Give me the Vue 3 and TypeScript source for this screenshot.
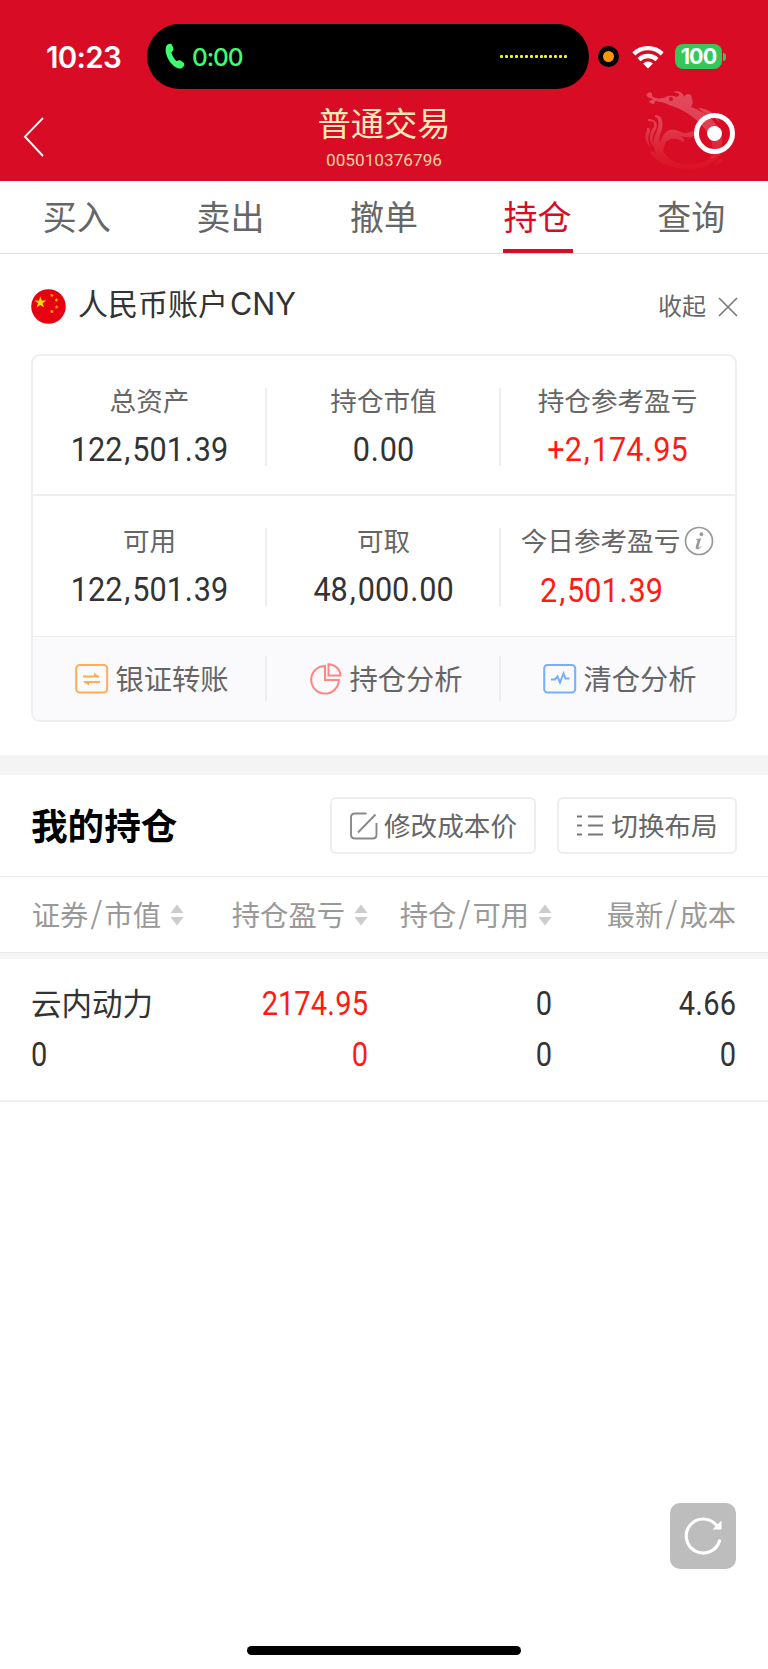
<script setup lang="ts">
interface Metric {
  label: string
  value: string
  red?: boolean
  info?: boolean
}

interface Column {
  title: string[]
  sortable: boolean
  top: string
  bottom: string
  red?: boolean
}

const tabs: string[] = ['买入', '卖出', '撤单', '持仓', '查询']
const activeTab = '持仓'

const metricRows: Metric[][] = [
  [
    { label: '总资产', value: '122,501.39' },
    { label: '持仓市值', value: '0.00' },
    { label: '持仓参考盈亏', value: '+2,174.95', red: true },
  ],
  [
    { label: '可用', value: '122,501.39' },
    { label: '可取', value: '48,000.00' },
    { label: '今日参考盈亏', value: '2,501.39', red: true, info: true },
  ],
]

const actions: { icon: string; label: string }[] = [
  { icon: 'transfer', label: '银证转账' },
  { icon: 'pie', label: '持仓分析' },
  { icon: 'pulse', label: '清仓分析' },
]

const columns: Column[] = [
  { title: ['证券', '市值'], sortable: true, top: '云内动力', bottom: '0' },
  { title: ['持仓盈亏'], sortable: true, top: '2174.95', bottom: '0', red: true },
  { title: ['持仓', '可用'], sortable: true, top: '0', bottom: '0' },
  { title: ['最新', '成本'], sortable: false, top: '4.66', bottom: '0' },
]

const isPunct = (ch: string): boolean => ch === ',' || ch === '.'
</script>

<template>
  <div class="screen">
    <header class="header">
      <div class="status">
        <span class="time">10:23</span>
        <div class="island">
          <svg class="phone" width="20" height="27" viewBox="0 0 20 27">
            <path d="M1.2 3.2C2.6.7 5.600-.2 7.200 2.200L8.300 5.600C8.700 7.300 7.600 8.200 6.400 9.400C7.200 12.800 9.200 15.800 11.800 18.200C13 17.600 14.300 16.900 15.600 17.600L18.600 19.700C20.200 21.200 18.900 23.700 16.900 25C14.200 26.500 10 24.800 6.600 20.800C2.500 16 -.7 8.400 1.200 3.200Z" />
          </svg>
          <span class="call">0:00</span>
          <span class="dots"><i v-for="n in 14" :key="n"></i></span>
        </div>
        <span class="mic"></span>
        <svg class="wifi" width="32" height="24" viewBox="0 0 32 24">
          <g fill="none" stroke="#fff" stroke-width="4.300">
            <path d="M1.800 8.900A20.500 20.500 0 0 1 30.200 8.900" />
            <path d="M7 14.600A13 13 0 0 1 25 14.600" />
          </g>
          <path d="M16 23.500L11 18.500A7.200 7.200 0 0 1 21 18.500Z" fill="#fff" />
        </svg>
        <span class="battery">100</span>
        <span class="nub"></span>
      </div>
      <div class="nav">
        <svg class="back" width="22" height="42" viewBox="0 0 22 42">
          <path d="M20 2L2 20.700L20 40" fill="none" stroke="#fff" stroke-width="1.900" />
        </svg>
        <div class="titles">
          <h1>普通交易</h1>
          <p>005010376796</p>
        </div>
        <div class="brand">
          <svg width="94" height="84" viewBox="0 0 94 84">
            <defs>
              <linearGradient id="fade" gradientUnits="userSpaceOnUse" x1="0" y1="0" x2="0" y2="84">
                <stop offset="0" stop-color="#fff" stop-opacity=".27" />
                <stop offset=".45" stop-color="#fff" stop-opacity=".2" />
                <stop offset=".75" stop-color="#fa8" stop-opacity=".12" />
                <stop offset="1" stop-color="#f64" stop-opacity=".03" />
              </linearGradient>
            </defs>
            <path
              fill="url(#fade)"
              fill-rule="evenodd"
              d="M3 3C5 1 8 3 7 6C10 9 16 9 21 7C24 5 28 6 32 7C36 5 35 3 28 2C34 0 38 3 39 7C42 2 47 4 47 9C48 11 48 14 46 17C61 22 72 32 76 44C80 54 75 64 67 69L65 68C70 60 67 47 60 39C50 27 38 19 24 15C19 12 15 12 10 11C10 15 7 15 6 13C3 13 4 10 7 10L8 9C5 8 4 8 3 7C1 6 1 4 3 3ZM24 9A2 2 0 1 0 28 9A2 2 0 1 0 24 9Z"
            />
            <path
              fill="url(#fade)"
              d="M10 25C19 25 19 36 15 45C13 55 18 65 28 71C42 78 62 76 76 58L79 60C66 83 37 84 20 73C8 64 6 53 11 43C14 37 15 28 10 27ZM3 29C11 29 14 34 10 41C7 46 7 52 9 57C3 51 4 43 9 37C10 32 8 31 3 31ZM2 38C5 37 6 41 4 44C2 49 4 55 6 58C0 53-1 45 2 41ZM16 67C14 57 14 49 21 42C27 37 32 41 39 43C44 44 48 39 52 42C48 49 44 48 35 46C40 48 41 51 37 52C34 48 23 47 20 54C18 58 18 63 19 68ZM5 62C9 60 10 64 16 68C23 73 26 76 30 77C22 76 12 72 7 65ZM53 18C64 18 71 25 75 33C70 27 65 24 59 23L65 29C60 24 57 21 53 18ZM74 69C79 67 78 74 72 74L70 76L70 72Z"
            />
          </svg>
          <span class="target"></span>
        </div>
      </div>
    </header>

    <nav class="tabs">
      <span v-for="tab in tabs" :key="tab" class="tab" :class="{ active: tab === activeTab }">
        <b>{{ tab }}</b>
      </span>
    </nav>

    <section class="account">
      <svg class="flag" width="35" height="35" viewBox="0 0 35 35">
        <circle cx="17.500" cy="17.500" r="17.300" fill="#e60012" />
        <g fill="#ffd800">
          <path d="M9.300 7.200L10.700 11.500H15.200L11.600 14.200L13 18.500L9.300 15.900L5.600 18.500L7 14.200L3.400 11.500H7.900Z" />
          <g fill="#ffb400">
            <path d="M20.800 4.500L21.500 5.700L22.800 6.200L21.700 7L21.400 8.400L20.500 7.300L19.100 7.300L19.900 6.200L19.400 4.900L20.600 5.300Z" />
            <path d="M25.500 9L26.100 10.300L27.500 10.800L26.300 11.600L26.200 13L25.100 12.100L23.800 12.400L24.300 11.100L23.700 9.900L25 10Z" />
            <path d="M25.500 16L26 17.300L27.400 17.300L26.400 18.300L26.900 19.700L25.600 18.900L24.400 19.700L24.700 18.300L23.700 17.300L25 17.200Z" />
            <path d="M20.900 20.500L21.500 21.700L22.900 21.800L21.900 22.800L22.200 24.200L20.900 23.500L19.700 24.200L19.900 22.800L18.900 21.800L20.200 21.700Z" />
          </g>
        </g>
      </svg>
      <span class="account-name">人民币账户<em>CNY</em></span>
      <span class="collapse">收起</span>
      <svg class="close" width="20" height="20" viewBox="0 0 20 20">
        <path d="M1 1L19 19M19 1L1 19" stroke="#777" stroke-width="1.600" />
      </svg>
    </section>

    <section class="card">
      <div v-for="(row, r) in metricRows" :key="r" class="metrics">
        <div v-for="m in row" :key="m.label" class="metric" :class="{ wide: m.info }">
          <div class="metric-label">
            <span>{{ m.label }}</span>
            <svg v-if="m.info" class="info" width="30" height="30" viewBox="0 0 30 30">
              <circle cx="15" cy="15" r="13.500" fill="none" stroke="#999" stroke-width="1.700" />
              <circle cx="17.400" cy="8.200" r="1.900" fill="#999" />
              <path d="M12.400 13.100L17 12.300L14.400 21.300Q14.600 22.100 17 19.900L17.400 20.400Q14.800 23.600 12.600 23.200Q11.200 22.700 11.800 20.600L13.700 14.200L12.200 13.800Z" fill="#999" />
            </svg>
          </div>
          <div class="num" :class="{ red: m.red }">
            <span v-for="(ch, i) in m.value" :key="i" :class="{ punct: isPunct(ch) }">{{ ch }}</span>
          </div>
        </div>
      </div>
      <div class="actions">
        <div v-for="a in actions" :key="a.label" class="action">
          <svg v-if="a.icon === 'transfer'" width="34" height="32" viewBox="0 0 34 32" fill="none" stroke="#ffac56" stroke-width="2">
            <rect x="1.200" y="2" width="31" height="27.500" rx="3.500" />
            <path d="M8 13.500H24M9 19H25" />
            <path d="M19 9.800L25 14H19ZM14 22.500L8 18.500H14Z" fill="#ffac56" stroke="none" />
          </svg>
          <svg v-else-if="a.icon === 'pie'" width="34" height="32" viewBox="0 0 34 32" fill="none" stroke="#ff8585" stroke-width="2">
            <path d="M16 3A13.800 13.800 0 1 0 29.800 17H16Z" />
            <path d="M19.500 1.200V12.500H31.500A12 12 0 0 0 19.500 1.200Z" />
          </svg>
          <svg v-else width="34" height="32" viewBox="0 0 34 32" fill="none" stroke="#76aeff" stroke-width="2">
            <rect x="1.200" y="2" width="31" height="27.500" rx="3.500" />
            <path d="M8 16.500H12L14.500 13.500L17 19.500L20.500 10.500L22.500 15.500H26.500" />
          </svg>
          <span>{{ a.label }}</span>
        </div>
      </div>
    </section>

    <div class="gap"></div>

    <section class="holdings-head">
      <h2>我的持仓</h2>
      <button class="btn edit">
        <svg width="30" height="30" viewBox="0 0 30 30" fill="none" stroke="#888" stroke-width="1.900">
          <path d="M17.500 2.500H6Q2 2.500 2 6.500V23.500Q2 27.500 6 27.500H23.500Q27.500 27.500 27.500 23.500V12M9 21.500L26.500 3.500" />
        </svg>
        <span>修改成本价</span>
      </button>
      <button class="btn layout">
        <svg width="28" height="24" viewBox="0 0 28 24" stroke="#777" stroke-width="2">
          <path d="M1 2.500H6M1 11.500H6M1 20.500H6M12 2.500H27M12 11.500H27M12 20.500H27" />
        </svg>
        <span>切换布局</span>
      </button>
    </section>

    <section class="table">
      <div class="thead">
        <div v-for="c in columns" :key="c.title[0]" class="th">
          <span>{{ c.title[0] }}</span>
          <template v-if="c.title.length > 1"><i class="slash">/</i><span>{{ c.title[1] }}</span></template>
          <svg v-if="c.sortable" width="14" height="22" viewBox="0 0 14 22" fill="#ccc">
            <path d="M7 .5L13.500 9H.5ZM7 21.500L13.500 13H.5Z" />
          </svg>
        </div>
      </div>
      <div class="band"></div>
      <div class="trow">
        <div v-for="(c, k) in columns" :key="k" class="td">
          <div v-if="k === 0" class="stock">{{ c.top }}</div>
          <div v-else class="num" :class="{ red: c.red }">
            <span v-for="(ch, i) in c.top" :key="i" :class="{ punct: isPunct(ch) }">{{ ch }}</span>
          </div>
          <div class="num" :class="{ red: c.red }"><span>{{ c.bottom }}</span></div>
        </div>
      </div>
    </section>

    <button class="refresh">
      <svg width="40" height="40" viewBox="0 0 40 40">
        <path d="M36.500 25A17 17 0 1 1 34 10" fill="none" stroke="#fff" stroke-width="3.200" stroke-linecap="round" />
        <path d="M38.500 4.500V13.500H29.500Z" fill="#fff" />
      </svg>
    </button>
    <div class="home"></div>
  </div>
</template>

<style>
body {
  background: #fff;
}
</style>

<style scoped>
* {
  box-sizing: border-box;
}
.screen {
  position: relative;
  width: 768px;
  height: 1669px;
  overflow: hidden;
  background: #fff;
  color: #333;
  font-family: 'Noto Sans CJK SC', sans-serif;
  font-weight: 400;
}
svg {
  display: block;
  flex: none;
}
h1,
h2,
p {
  margin: 0;
}
.header {
  height: 181px;
  background: #d80c24;
}
.status {
  display: flex;
  align-items: center;
  height: 89px;
  padding: 24px 0 0 46px;
  font-family: Inter, sans-serif;
}
.time {
  width: 101px;
  color: #fff;
  font-size: 29.500px;
  font-weight: 600;
  letter-spacing: -0.700px;
  line-height: 36px;
}
.island {
  display: flex;
  align-items: center;
  width: 442px;
  height: 65px;
  padding: 0 22px 0 18px;
  border-radius: 33px;
  background: #000;
}
.phone {
  fill: #3dff70;
}
.call {
  margin-left: 7px;
  color: #3dff70;
  font-size: 24.500px;
  font-weight: 500;
  letter-spacing: -1.100px;
}
.dots {
  display: flex;
  gap: 1.900px;
  margin-left: auto;
}
.dots i {
  width: 3px;
  height: 3px;
  border-radius: 1px;
  background: #f6f60c;
}
.mic {
  width: 21px;
  height: 21px;
  margin-left: 9px;
  border: 5.500px solid #000;
  border-radius: 50%;
  background: #ff9500;
}
.wifi {
  margin-left: 13px;
}
.battery {
  width: 47px;
  height: 25px;
  margin-left: 11px;
  border-radius: 8px;
  background: #34c759;
  color: #fff;
  font-size: 21.500px;
  font-weight: 700;
  letter-spacing: -0.900px;
  line-height: 25px;
  text-align: center;
}
.nub {
  width: 3px;
  height: 8px;
  margin-left: 1px;
  border-radius: 0 4px 4px 0;
  background: #34c759;
}
.nav {
  position: relative;
  display: flex;
  justify-content: center;
  height: 92px;
}
.back {
  position: absolute;
  left: 23px;
  top: 27px;
}
.titles {
  color: #ffe9b8;
  text-align: center;
}
.titles h1 {
  margin-top: 11px;
  font-size: 33.300px;
  font-weight: 400;
  line-height: 44px;
}
.titles p {
  margin-top: 5px;
  font: 400 17.200px/22px Roboto, sans-serif;
  color: #fbd3a6;
}
.brand {
  position: absolute;
  left: 645px;
  top: 1px;
}
.target {
  position: absolute;
  left: 49px;
  top: 23px;
  width: 41px;
  height: 41px;
  border: 5.500px solid #fff;
  border-radius: 50%;
}
.target::after {
  content: '';
  position: absolute;
  left: 7.500px;
  top: 7.500px;
  width: 15px;
  height: 15px;
  border-radius: 50%;
  background: #fff;
}
.tabs {
  display: flex;
  height: 73px;
  border-bottom: 1px solid #ddd;
}
.tab {
  display: flex;
  flex: 1;
  justify-content: center;
  color: #666;
  font-size: 34px;
  line-height: 70px;
}
.tab b {
  width: 70px;
  height: 72px;
  font-weight: 400;
  text-align: center;
}
.tab.active b {
  border-bottom: 4px solid #d80c24;
  color: #d80c24;
}
.account {
  display: flex;
  align-items: center;
  height: 100px;
  padding: 5px 30px 0 31px;
}
.account-name {
  margin: -9px auto 0 12px;
  font-size: 30px;
}
.account-name em {
  margin-left: 2px;
  font-family: Inter, sans-serif;
  font-size: 30.500px;
  font-style: normal;
  font-weight: 400;
}
.collapse {
  color: #666;
  font-size: 24px;
  margin: -4px 12px 0 0;
}
.card {
  margin: 0 31px 0;
  overflow: hidden;
  border: 2px solid #eee;
  border-radius: 9px;
}
.metrics {
  display: flex;
  height: 140px;
  border-bottom: 2px solid #eee;
}
.metrics + .metrics {
  height: 141px;
  border-bottom-width: 1px;
}
.metric {
  position: relative;
  flex: 1;
  padding: 25px 1px 0 0;
}
.metric:not(:last-child)::after,
.action:not(:last-child)::after {
  content: '';
  position: absolute;
  right: 0;
  top: 32px;
  width: 2px;
  height: 78px;
  background: #eee;
}
.metric-label {
  display: flex;
  justify-content: center;
  gap: 4px;
  align-items: center;
  height: 38px;
  color: #666;
  font-size: 26.600px;
  line-height: 38px;
}
.info {
  margin-top: 2px;
}
.num {
  color: #333;
  font-family: Roboto, sans-serif;
  font-size: 34px;
  font-weight: 400;
  line-height: 40px;
  white-space: nowrap;
  text-align: center;
  transform: scaleX(0.9);
}
.num .punct {
  display: inline-block;
  width: 11px;
  text-align: center;
}
.metric .num {
  margin-top: 10px;
}
.num.red {
  color: #ff1a14;
}
.metric.wide .num {
  margin-top: 11px;
  margin-left: -32px;
}
.actions {
  display: flex;
  height: 83px;
  background: #fafafc;
}
.action {
  position: relative;
  display: flex;
  flex: 1;
  align-items: center;
  justify-content: center;
  gap: 6px;
  padding-left: 4px;
  color: #666;
  font-size: 28.300px;
}
.action:not(:last-child)::after {
  top: 19px;
  height: 46px;
}
.action span {
  margin-top: -2px;
}
.gap {
  height: 20px;
  margin-top: 33px;
  background: #f4f4f4;
}
.holdings-head {
  display: flex;
  align-items: center;
  height: 102px;
  padding: 0 31px;
  border-bottom: 1px solid #e8e8e8;
}
h2 {
  margin: -3px auto 0 0;
  color: #000;
  font-size: 36.600px;
  font-weight: 700;
}
.btn {
  display: flex;
  align-items: center;
  justify-content: center;
  height: 57px;
  padding: 0;
  border: 2px solid #eee;
  border-radius: 6px;
  background: #fff;
  color: #666;
  font: 400 26.600px 'Noto Sans CJK SC', sans-serif;
}
.btn span {
  margin-top: -2px;
}
.edit {
  width: 206px;
  gap: 5px;
}
.layout {
  width: 180px;
  margin-left: 21px;
  gap: 7px;
}
.thead,
.trow {
  display: grid;
  grid-template-columns: 184px 184px 184px 184px;
  padding-right: 32px;
}
.thead {
  height: 75px;
}
.th {
  display: flex;
  align-items: center;
  justify-content: flex-end;
  color: #999;
  font-size: 28.300px;
  white-space: nowrap;
}
.th span {
  margin-top: -3px;
}
.th svg {
  margin-left: 9px;
}
.slash {
  display: flex;
  justify-content: center;
  width: 16px;
  margin-top: -7px;
  font-size: 30px;
  font-style: normal;
}
.band {
  height: 7px;
  border-top: 1px solid #e9e9e9;
  background: #f5f5f5;
}
.trow {
  height: 143px;
  padding-top: 25px;
  border-bottom: 2px solid #f0f0f0;
}
.td {
  text-align: right;
}
.td:first-child {
  padding-left: 31px;
  text-align: left;
}
.td .num {
  height: 40px;
  margin-bottom: 11px;
  font-size: 33px;
  text-align: inherit;
  transform: scaleX(0.88);
  transform-origin: right;
}
.td .punct {
  width: 9.500px;
}
.td:first-child .num {
  transform-origin: left;
}
.stock {
  height: 40px;
  margin-bottom: 11px;
  font-size: 30.500px;
  line-height: 36px;
}
.refresh {
  position: absolute;
  left: 670px;
  top: 1503px;
  display: grid;
  place-items: center;
  width: 66px;
  height: 66px;
  padding: 0;
  border: 0;
  border-radius: 10px;
  background: #bdbdbd;
}
.home {
  position: absolute;
  left: 247px;
  top: 1646px;
  width: 274px;
  height: 9px;
  border-radius: 5px;
  background: #000;
}
</style>
